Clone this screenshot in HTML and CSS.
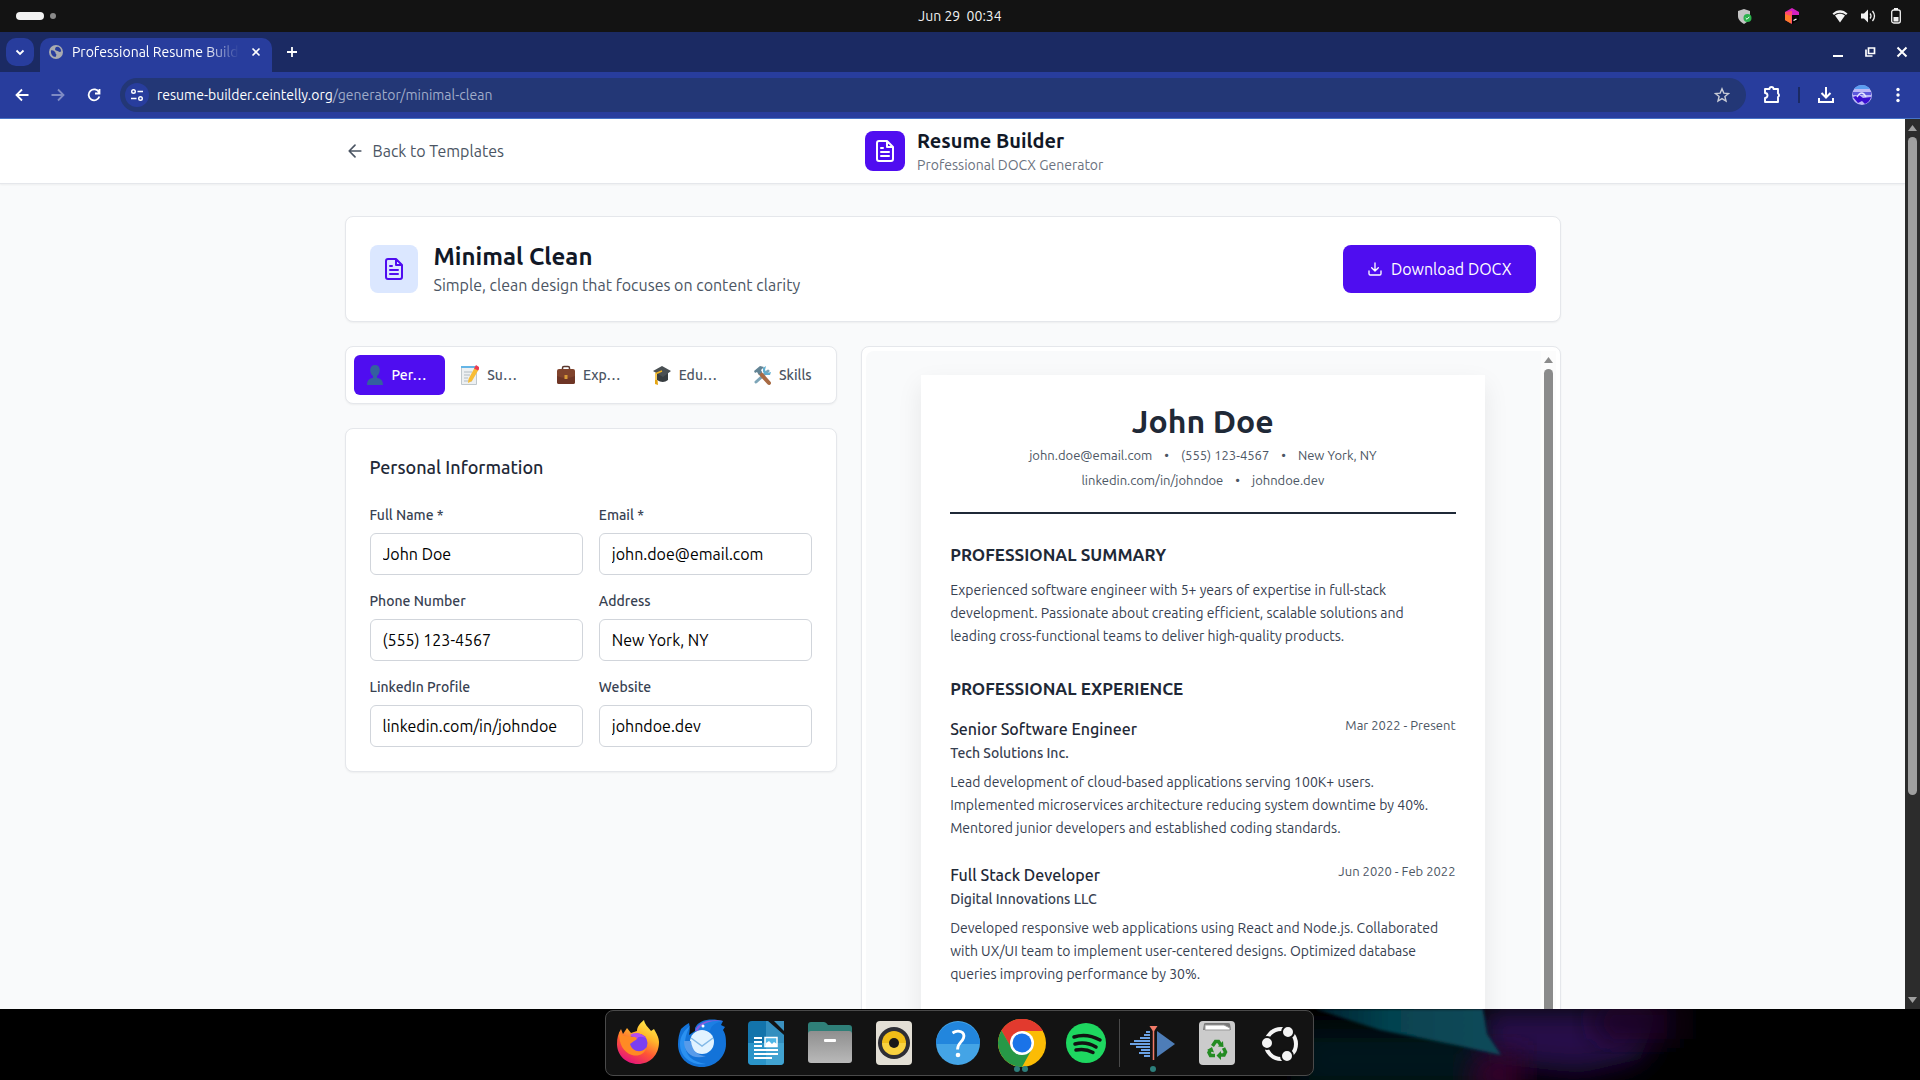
FILE: index.html
```html
<!DOCTYPE html>
<html lang="en">
<head>
    <meta charset="UTF-8">
    <meta name="viewport" content="width=device-width, initial-scale=1.0">
    <title>Professional Resume Builder</title>
    <link rel="stylesheet" href="styles.css">
</head>
<body>
    <!-- System bar -->
    <div class="system-bar">
        <div class="workspaces"><span class="workspace active"></span><span class="workspace"></span></div>
        <time class="clock">Jun 29&nbsp; 00:34</time>
        <div class="tray">
            <svg class="tray-shield" width="16" height="16" viewBox="0 0 16 16"><path d="M8 1l6 2v5c0 4-3 6-6 8-3-2-6-4-6-8V3z" fill="#c4c4c4"/><circle cx="11.500" cy="10" r="4" fill="#2bb24c"/><path d="M9.700 10l1.300 1.300 2.300-2.500" fill="none" stroke="#fff"/></svg>
            <svg class="tray-cube" width="16" height="16" viewBox="0 0 16 16"><path d="M1 4l7-4 7 4v4H1z" fill="#d41fc0"/><path d="M1 4l7-1v13l-7-4z" fill="#ff4a6d"/><path d="M1 6l6 2v7.500L1 12z" fill="#ff7a2b"/><path d="M8 7h7v5l-7 4z" fill="#050505"/><path d="M9.500 12.500l3-1.500" stroke="#fff" stroke-width="1.300"/></svg>
            <svg width="16" height="16" viewBox="0 0 16 16"><path d="M.5 5.500C5 1 11 1 15.500 5.500L14 7C10.500 4 5.500 4 2 7z" fill="#f2f2f2"/><path d="M3 7.500c3-2.500 7-2.500 10 0L8 14.500z" fill="#f2f2f2"/></svg>
            <svg width="16" height="16" viewBox="0 0 16 16"><path d="M1 5.500h3l4-4v13l-4-4H1z" fill="#f2f2f2"/><path d="M10 5.500q2 2.500 0 5M12.500 3q4 5 0 10" fill="none" stroke="#f2f2f2" stroke-width="1.300"/></svg>
            <svg width="16" height="16" viewBox="0 0 16 16"><path d="M6 0h4v2H6z" fill="#f2f2f2"/><rect x="3.700" y="2" width="8.600" height="13" rx="2" fill="none" stroke="#f2f2f2" stroke-width="1.300"/><path d="M5.500 9h5v4.500h-5z" fill="#f2f2f2"/></svg>
        </div>
    </div>

    <!-- Browser window -->
    <div class="tab-strip">
        <button class="tab-search" aria-label="Search tabs"><svg width="10" height="10" viewBox="0 0 10 10"><path d="M1.500 3.500L5 7l3.500-3.500" fill="none" stroke="#fff" stroke-width="1.800"/></svg></button>
        <div class="tab">
            <svg width="14" height="14" viewBox="0 0 14 14"><circle cx="7" cy="7" r="7" fill="#a9abb0"/><path d="M2 5.500c2-.5 3 .5 4 1.500 1 .7 0 1.500 1 2 1 .6 0 2-.5 3-3 0-5-3-4.500-6.500zM7 2l2-.2c2 .8 3 2.500 3.200 4.500-1 1-2.200.7-3-.1L7 5.500C5.500 5 6 3 7 2z" fill="#283d9d"/></svg>
            <span class="tab-title">Professional Resume Builder</span>
            <button class="tab-close" aria-label="Close tab"><svg width="10" height="10" viewBox="0 0 10 10"><path d="M1.500 1.500l7 7m0-7l-7 7" stroke="#fff" stroke-width="1.600"/></svg></button>
        </div>
        <button class="new-tab" aria-label="New tab"><svg width="12" height="12" viewBox="0 0 12 12"><path d="M6 1v10M1 6h10" stroke="#fff" stroke-width="1.800"/></svg></button>
        <div class="window-buttons">
            <button aria-label="Minimize"><svg width="12" height="12" viewBox="0 0 12 12"><path d="M1 10h10" stroke="#fff" stroke-width="2"/></svg></button>
            <button aria-label="Restore"><svg width="12" height="12" viewBox="0 0 12 12"><path d="M4.500 2h6v5.500h-6zM2 3.500V10h6.500" fill="none" stroke="#fff" stroke-width="1.700"/></svg></button>
            <button aria-label="Close"><svg width="12" height="12" viewBox="0 0 12 12"><path d="M1.500 1.500l9 9m0-9l-9 9" stroke="#fff" stroke-width="2"/></svg></button>
        </div>
    </div>
    <div class="toolbar">
        <div class="nav-buttons">
            <button aria-label="Back"><svg width="14" height="14" viewBox="0 0 14 14"><path d="M13.500 7H2M7 1.500L1.500 7 7 12.500" fill="none" stroke="#fff" stroke-width="1.800"/></svg></button>
            <button class="dimmed" aria-label="Forward"><svg width="14" height="14" viewBox="0 0 14 14"><path d="M.5 7H12M7 1.500L12.500 7 7 12.500" fill="none" stroke="#fff" stroke-width="1.800"/></svg></button>
            <button aria-label="Reload"><svg width="14" height="14" viewBox="0 0 14 14"><path d="M12 4.200A5.500 5.500 0 1 0 12.400 8.500M12.500 1v4.500H8" fill="none" stroke="#fff" stroke-width="1.800"/></svg></button>
        </div>
        <div class="address-bar">
            <button class="site-info" aria-label="Site information"><svg width="14" height="14" viewBox="0 0 14 14"><path d="M7.500 3.500H13M1 10.500h5.500" stroke="#fff" stroke-width="1.700"/><circle cx="3.500" cy="3.500" r="1.800" fill="none" stroke="#fff" stroke-width="1.400"/><circle cx="10.500" cy="10.500" r="1.800" fill="none" stroke="#fff" stroke-width="1.400"/></svg></button>
            <div class="url">resume-builder.ceintelly.org<span>/generator/minimal-clean</span></div>
            <button class="star" aria-label="Bookmark"><svg width="16" height="16" viewBox="0 0 16 16"><path d="M8 1.800l1.800 4.300 4.700.4-3.600 3 1.100 4.600-4-2.500-4 2.500 1.100-4.600-3.600-3 4.700-.4z" fill="none" stroke="#c9ccd6" stroke-width="1.400"/></svg></button>
        </div>
        <div class="toolbar-actions">
            <button aria-label="Extensions"><svg width="20" height="20" viewBox="0 0 20 20"><path d="M3 4h4.500a2 2 0 0 1 4 0H16v4.500a2 2 0 0 1 0 3.500V17H3v-4a2.500 2.500 0 0 0 0-5z" fill="none" stroke="#fff" stroke-width="1.900" stroke-linejoin="round"/></svg></button>
            <span class="toolbar-divider"></span>
            <button aria-label="Downloads"><svg width="18" height="18" viewBox="0 0 18 18"><path d="M9 1v10M4.500 7L9 11.500 13.500 7M2 12v4h14v-4" fill="none" stroke="#fff" stroke-width="2"/></svg></button>
            <button aria-label="Profile"><svg width="20" height="20" viewBox="0 0 20 20"><circle cx="10" cy="10" r="10" fill="#bcb8f7"/><path d="M2 4a10 10 0 0 1 16 0z" fill="#5b9df0"/><path d="M1 7h18v3H1z" fill="#5d59dc"/><path d="M1 12l6-2 4 3 8-1a10 10 0 0 1-6 7l-3-3-4 2z" fill="#3a10d0"/><path d="M5 12q5-8 9 0" fill="none" stroke="#e4e6ff" stroke-width="1.500"/></svg></button>
            <button aria-label="Menu"><svg width="16" height="16" viewBox="0 0 16 16" fill="#fff"><circle cx="8" cy="2.500" r="1.700"/><circle cx="8" cy="8" r="1.700"/><circle cx="8" cy="13.500" r="1.700"/></svg></button>
        </div>
    </div>

    <div class="viewport">
        <div class="page">
            <header class="site-header">
                <div class="container header-inner">
                    <a href="#" class="back-link">
                        <svg width="20" height="20" viewBox="0 0 24 24" fill="none" stroke="currentColor" stroke-width="2" stroke-linecap="round" stroke-linejoin="round"><path d="M19 12H5M12 19l-7-7 7-7"/></svg>
                        Back to Templates
                    </a>
                    <div class="brand">
                        <div class="brand-icon">
                            <svg width="24" height="24" viewBox="0 0 24 24" fill="none" stroke="currentColor" stroke-width="2" stroke-linecap="round" stroke-linejoin="round"><path d="M14 2H6a2 2 0 0 0-2 2v16a2 2 0 0 0 2 2h12a2 2 0 0 0 2-2V8zM14 2v6h6M16 13H8M16 17H8M10 9H8"/></svg>
                        </div>
                        <div>
                            <div class="brand-name">Resume Builder</div>
                            <div class="brand-tagline">Professional DOCX Generator</div>
                        </div>
                    </div>
                    <div class="header-spacer"></div>
                </div>
            </header>

            <main class="container main">
                <section class="card template-card">
                    <div class="template-icon">
                        <svg width="24" height="24" viewBox="0 0 24 24" fill="none" stroke="currentColor" stroke-width="2" stroke-linecap="round" stroke-linejoin="round"><path d="M14 2H6a2 2 0 0 0-2 2v16a2 2 0 0 0 2 2h12a2 2 0 0 0 2-2V8zM14 2v6h6M16 13H8M16 17H8M10 9H8"/></svg>
                    </div>
                    <div class="template-text">
                        <h1>Minimal Clean</h1>
                        <p>Simple, clean design that focuses on content clarity</p>
                    </div>
                    <button class="download-btn">
                        <svg width="16" height="16" viewBox="0 0 24 24" fill="none" stroke="currentColor" stroke-width="2" stroke-linecap="round" stroke-linejoin="round"><path d="M21 15v4a2 2 0 0 1-2 2H5a2 2 0 0 1-2-2v-4M7 10l5 5 5-5M12 15V3"/></svg>
                        Download DOCX
                    </button>
                </section>

                <div class="columns">
                    <div class="editor">
                        <nav class="card tabs">
                            <button class="tab-btn active">
                                <svg width="18" height="22" viewBox="0 0 18 22"><path d="M1 21c0-5 3-7 6-7v-2C3 9 3 1 9 1s6 8 2 11v2c3 0 6 2 6 7z" fill="#34609f"/></svg>
                                <span>Per…</span>
                            </button>
                            <button class="tab-btn">
                                <svg width="18" height="22" viewBox="0 0 18 22"><path d="M.5 2.500h15v18H.5z" fill="#edf0f2" stroke="#bfc7cc"/><path d="M0 2h16v2H0z" fill="#64b5e6"/><path d="M3 8h8M3 11h6M3 14h4M3 17h8" stroke="#b3bcc2"/><path d="M14 3l4 2-7 12-4 2 .5-4z" fill="#f8bd35"/><path d="M15 1l3 2v2l-1 1.500-4-2z" fill="#ec3b52"/></svg>
                                <span>Su…</span>
                            </button>
                            <button class="tab-btn">
                                <svg width="18" height="22" viewBox="0 0 18 22"><path d="M5.500 6V4q0-1.500 1.500-1.500h4q1.500 0 1.500 1.500v2" fill="none" stroke="#5b382e" stroke-width="1.500"/><rect y="5" width="18" height="15" rx="2" fill="#80432c"/><path d="M0 12q9 4 18 0v6q0 2-2 2H2q-2 0-2-2z" fill="#6e3525"/><rect x="7.500" y="11" width="3" height="4" fill="#d99a37"/></svg>
                                <span>Exp…</span>
                            </button>
                            <button class="tab-btn">
                                <svg width="18" height="22" viewBox="0 0 18 22"><path d="M4 9h11v7q-5 4-11 0z" fill="#373d40"/><path d="M0 7l9-5 9 5-8 6z" fill="#4a5053"/><path d="M9 7L3 9.500V17" fill="none" stroke="#f2b51d" stroke-width="1.500"/><path d="M2 16h2.500l.5 5-3-1z" fill="#e5a512"/></svg>
                                <span>Edu…</span>
                            </button>
                            <button class="tab-btn last">
                                <svg width="18" height="22" viewBox="0 0 18 22"><path d="M15 7L3 18" stroke="#7da5b8" stroke-width="3" stroke-linecap="round"/><path d="M13 2l-1 4 2 3 4-1-1 3h-4l-3-3V4z" fill="#5faed0"/><path d="M7 9l9 10" stroke="#a86a43" stroke-width="4" stroke-linecap="round"/><path d="M1 7l6-5 4 1-3 3 1 2-3 3-2-3-2 1z" fill="#628394"/></svg>
                                <span>Skills</span>
                            </button>
                        </nav>

                        <form class="card form-card">
                            <h2>Personal Information</h2>
                            <div class="form-grid">
                                <div class="field">
                                    <label for="fullName">Full Name *</label>
                                    <input type="text" id="fullName" value="John Doe">
                                </div>
                                <div class="field">
                                    <label for="email">Email *</label>
                                    <input type="email" id="email" value="john.doe@email.com">
                                </div>
                                <div class="field">
                                    <label for="phone">Phone Number</label>
                                    <input type="tel" id="phone" value="(555) 123-4567">
                                </div>
                                <div class="field">
                                    <label for="address">Address</label>
                                    <input type="text" id="address" value="New York, NY">
                                </div>
                                <div class="field">
                                    <label for="linkedin">LinkedIn Profile</label>
                                    <input type="text" id="linkedin" value="linkedin.com/in/johndoe">
                                </div>
                                <div class="field">
                                    <label for="website">Website</label>
                                    <input type="text" id="website" value="johndoe.dev">
                                </div>
                            </div>
                        </form>
                    </div>

                    <div class="card preview-card">
                        <div class="preview">
                            <article class="paper">
                                <div class="paper-header">
                                    <div class="paper-name">John Doe</div>
                                    <div class="contact"><span>john.doe@email.com</span><span>•</span><span>(555) 123-4567</span><span>•</span><span>New York, NY</span></div>
                                    <div class="contact"><span>linkedin.com/in/johndoe</span><span>•</span><span>johndoe.dev</span></div>
                                </div>
                                <section class="paper-section">
                                    <h3>PROFESSIONAL SUMMARY</h3>
                                    <p>Experienced software engineer with 5+ years of expertise in full-stack<br>development. Passionate about creating efficient, scalable solutions and<br>leading cross-functional teams to deliver high-quality products.</p>
                                </section>
                                <section class="paper-section">
                                    <h3>PROFESSIONAL EXPERIENCE</h3>
                                    <div class="job">
                                        <div class="job-head">
                                            <h4>Senior Software Engineer</h4>
                                            <span class="dates">Mar 2022 - Present</span>
                                        </div>
                                        <div class="company">Tech Solutions Inc.</div>
                                        <p>Lead development of cloud-based applications serving 100K+ users.<br>Implemented microservices architecture reducing system downtime by 40%.<br>Mentored junior developers and established coding standards.</p>
                                    </div>
                                    <div class="job">
                                        <div class="job-head">
                                            <h4>Full Stack Developer</h4>
                                            <span class="dates">Jun 2020 - Feb 2022</span>
                                        </div>
                                        <div class="company">Digital Innovations LLC</div>
                                        <p>Developed responsive web applications using React and Node.js. Collaborated<br>with UX/UI team to implement user-centered designs. Optimized database<br>queries improving performance by 30%.</p>
                                    </div>
                                </section>
                            </article>
                        </div>
                        <div class="scrollbar light">
                            <svg width="9" height="6" viewBox="0 0 9 6"><path d="M4.500 0L9 6H0z" fill="currentColor"/></svg>
                            <span class="thumb"></span>
                        </div>
                    </div>
                </div>
            </main>
        </div>
        <div class="scrollbar dark">
            <svg width="9" height="6" viewBox="0 0 9 6"><path d="M4.500 0L9 6H0z" fill="currentColor"/></svg>
            <div class="track"><span class="thumb"></span></div>
            <svg width="9" height="6" viewBox="0 0 9 6"><path d="M4.500 6L9 0H0z" fill="currentColor"/></svg>
        </div>
    </div>

    <!-- Desktop and dock -->
    <footer class="desktop">
        <svg class="wallpaper" viewBox="0 0 1920 71" preserveAspectRatio="none">
            <defs>
                <filter id="soft" x="-20%" y="-50%" width="140%" height="200%"><feGaussianBlur stdDeviation="14"/></filter>
                <filter id="edge"><feGaussianBlur stdDeviation="1.500"/></filter>
                <linearGradient id="teal" x1="0" x2="1"><stop offset="0" stop-color="#04202e"/><stop offset=".4" stop-color="#06424f"/><stop offset="1" stop-color="#084a5a"/></linearGradient>
            </defs>
            <path d="M1300 20h200v60h-200z" fill="#06131a" filter="url(#soft)"/>
            <path d="M1480 0h180l-20 50-60 14-90-10z" fill="#26104a" filter="url(#soft)"/>
            <path d="M1475 45h50v40h-60z" fill="#35052c" filter="url(#soft)"/>
            <path d="M1590 0h90v30h-80z" fill="#1a0622" filter="url(#soft)"/>
            <path d="M1315 0h168l4 25 14 21-46-10-75-15z" fill="url(#teal)" filter="url(#edge)"/>
        </svg>
        <div class="dock">
            <button class="app" aria-label="Firefox"><svg width="48" height="48" viewBox="0 0 48 48">
                <defs><linearGradient id="fox" x1=".8" y1="0" x2=".3" y2="1"><stop offset="0" stop-color="#fff44f"/><stop offset=".35" stop-color="#ffb52b"/><stop offset=".65" stop-color="#ff5634"/><stop offset="1" stop-color="#e3117f"/></linearGradient></defs>
                <path d="M30 1c1 5 4 7 7 11l3-2c2 4 5 8 5 13 0 13-9 22-21 22S3 36 3 25c0-6 1-10 4-15l2 5 4-6 4 5 6-2c0-4 3-8 7-11z" fill="url(#fox)"/>
                <circle cx="24" cy="24" r="9.500" fill="#7b3ff2"/><path d="M16 16q8-5 16 3-8-3-9 1z" fill="#b64cf0"/>
                <path d="M5 13l5 4 11 1c3 1 2 3-1 4l-4 3c2 7 10 10 16 4-1 6-8 9-14 7C9 33 5 25 5 13z" fill="#ff8a24"/>
            </svg></button>
            <button class="app" aria-label="Thunderbird"><svg width="48" height="48" viewBox="0 0 48 48">
                <path d="M17 9c4-9 17-10 28-7l-2 4 4 2-2 3c3 5 3 9 3 14 0 13-11 23-24 23C9 48 0 38 0 25c0-5 1-10 3-15 3-3 6-5 8-6 1 4 1 8 0 12l6-4z" fill="#1373d9"/>
                <path d="M2 25c0 14 13 22 26 20C14 43 7 36 7 25c0-8 3-14 5-18C6 11 2 18 2 25z" fill="#2b91f1"/>
                <path d="M17 12C20 2 34 0 45 2c-10 1-15 4-17 9z" fill="#865de0"/><path d="M20 11C24 4 34 1 45 2c-9 2-12 5-13 10z" fill="#1c7fe3"/><circle cx="25" cy="7" r="1.500" fill="#fff"/>
                <circle cx="24" cy="23" r="12" fill="#e2f3ff"/><path d="M13 19l11 8 11-8" fill="none" stroke="#82b9e7" stroke-width="1.500"/><path d="M6 22c0 13 10 19 22 15-8 0-14-5-15-15z" fill="#579bea"/>
            </svg></button>
            <button class="app" aria-label="LibreOffice Writer"><svg width="48" height="48" viewBox="0 0 48 48">
                <path d="M10 2h16l16 14v26q0 4-4 4H10q-4 0-4-4V6q0-4 4-4z" fill="#1374ab"/><path d="M6 24h36v18q0 4-4 4H10q-4 0-4-4z" fill="#2a94c8"/><path d="M24 2h2l16 14v26q0 4-4 4H24z" fill="#63b8df" opacity=".4"/><path d="M32 2h10v10z" fill="#3b91bf"/>
                <path d="M12 19h8M12 23h8M12 27h8M12 31h24M12 35h24M12 39h18" stroke="#fff" stroke-width="2"/><path d="M23 18.500h12v9H23z" fill="#4fb6e6" stroke="#fff" stroke-width="1.500"/><path d="M24 27v-3l3-2 3 3 2-2 3 2v2z" fill="#fff"/>
            </svg></button>
            <button class="app" aria-label="Files"><svg width="48" height="48" viewBox="0 0 48 48">
                <defs><linearGradient id="folder" x1="0" y1="0" x2="0" y2="1"><stop offset="0" stop-color="#8f8f8f"/><stop offset="1" stop-color="#b9b9b9"/></linearGradient></defs>
                <path d="M5 3h13q2 0 4 3h21q3 0 3 3v12H2V6q0-3 3-3z" fill="#2f7f78"/><rect x="2" y="12" width="44" height="32" rx="3" fill="url(#folder)"/><rect x="18" y="20" width="12" height="3" rx="1" fill="#fff"/>
            </svg></button>
            <button class="app" aria-label="Rhythmbox"><svg width="48" height="48" viewBox="0 0 48 48">
                <rect x="6" y="2" width="36" height="44" rx="4" fill="#e3dfd5"/><circle cx="24" cy="24" r="16" fill="#2e2e35"/><circle cx="24" cy="24" r="12" fill="#f1bd17"/><path d="M12 24a12 12 0 0 0 24 0z" fill="#ffe05b" opacity=".6"/><circle cx="24" cy="24" r="5" fill="#191919"/>
            </svg></button>
            <button class="app" aria-label="Help"><svg width="48" height="48" viewBox="0 0 48 48">
                <circle cx="24" cy="24" r="22" fill="#44a4e6"/><path d="M2 25a22 22 0 0 1 44 0z" fill="#2286dd"/><path d="M18.500 14c6-4 13-1 11 5-1.500 4.500-6 5-6 11.500" fill="none" stroke="#fff" stroke-width="2.800"/><circle cx="24" cy="36" r="2.300" fill="#fff"/>
            </svg></button>
            <button class="app two-windows" aria-label="Chrome"><svg width="48" height="48" viewBox="0 0 48 48">
                <circle cx="24" cy="24" r="24" fill="#fbbc05"/><path d="M3.500 11.500A24 24 0 0 1 45 12H24L13 29z" fill="#e23a2e"/><path d="M3.500 11.500A24 24 0 0 0 24 48l10-18-20 0z" fill="#279847"/><circle cx="24" cy="24" r="12" fill="#fff"/><circle cx="24" cy="24" r="9.500" fill="#1a73e8"/>
            </svg></button>
            <button class="app" aria-label="Spotify"><svg width="48" height="48" viewBox="0 0 48 48">
                <circle cx="24" cy="24" r="20" fill="#1ed760"/><path d="M12 18q13-4 26 3M13 25q11-3 21 3M14 31q9-2 17 2.500" fill="none" stroke="#121212" stroke-width="3.500" stroke-linecap="round"/>
            </svg></button>
            <span class="dock-divider"></span>
            <button class="app one-window" aria-label="Audio player"><svg width="48" height="48" viewBox="0 0 48 48">
                <path d="M17 13h4M15 16h6M11 19h10M5 22h16M1 25h20M7 28h14M12 31h9M10 34h11M15 37h6" stroke="#6ba2e5" stroke-width="2"/><path d="M28 12l18 13-18 13z" fill="#4e7db7"/><path d="M24.500 8v33" stroke="#f27a68" stroke-width="1.500"/><path d="M20.500 7h8l-4 6z" fill="#f27a68"/>
            </svg></button>
            <button class="app" aria-label="Trash"><svg width="48" height="48" viewBox="0 0 48 48">
                <rect x="6" y="2" width="36" height="44" rx="4" fill="#cbcbcb"/><path d="M10 11l1-6q0-1 2-1h22q2 0 2 1l1 6z" fill="#777"/><path d="M12 11V6h19l6 3v2z" fill="#fff" stroke="#999"/>
                <g fill="none" stroke="#238b22" stroke-width="3.500"><path d="M19.500 27l3-4.500h3l2 3"/><path d="M30.500 29l2 4-1.500 3h-4"/><path d="M22 36.500h-4.500l-1.500-3 1.500-2.500"/></g><path d="M25 27.500l5.500.5-.5-6zM28 32l-4.500 4.500L28 41zM14 31l5-3 2 5.500z" fill="#238b22"/>
            </svg></button>
            <button class="app" aria-label="Show apps"><svg width="48" height="48" viewBox="0 0 48 48">
                <circle cx="24" cy="25" r="15" fill="none" stroke="#f4f4f4" stroke-width="4"/><g fill="#f4f4f4" stroke="#131313" stroke-width="2"><circle cx="10" cy="24" r="6"/><circle cx="31" cy="13" r="6"/><circle cx="30" cy="37" r="6"/></g>
            </svg></button>
        </div>
    </footer>
</body>
</html>
```

FILE: styles.css
```css
* {
    box-sizing: border-box;
    margin: 0;
    padding: 0;
}

body {
    display: flex;
    flex-direction: column;
    height: 100vh;
    overflow: hidden;
    font-family: Ubuntu, "Noto Sans", sans-serif;
    font-size: 16px;
    line-height: 24px;
    background: #000;
    color: #111827;
}

button {
    display: flex;
    align-items: center;
    justify-content: center;
    border: none;
    background: none;
    font: inherit;
    color: inherit;
    cursor: pointer;
}

svg {
    flex-shrink: 0;
}

/* System bar */
.system-bar {
    display: grid;
    grid-template-columns: 1fr auto 1fr;
    align-items: center;
    height: 32px;
    flex-shrink: 0;
    padding: 0 16px;
    background: #131313;
    color: #f2f2f2;
}

.workspaces {
    display: flex;
    align-items: center;
    gap: 6px;
}

.workspace {
    width: 6px;
    height: 6px;
    border-radius: 4px;
    background: #8a8a8a;
}

.workspace.active {
    width: 28px;
    height: 8px;
    background: #f2f2f2;
}

.clock {
    font-size: 14px;
}

.tray {
    display: flex;
    justify-content: flex-end;
    gap: 12px;
}

.tray-shield,
.tray-cube {
    margin-right: 20px;
}

/* Browser */
.tab-strip {
    display: flex;
    align-items: center;
    height: 40px;
    flex-shrink: 0;
    padding: 0 4px 0 6px;
    background: #1b2a63;
    color: #fff;
}

.tab-search {
    width: 28px;
    height: 28px;
    border-radius: 10px;
    background: #283d9d;
}

.tab {
    display: flex;
    align-items: center;
    align-self: flex-end;
    gap: 9px;
    width: 232px;
    height: 34px;
    margin-left: 6px;
    padding: 0 8px 6px 9px;
    border-radius: 10px 10px 0 0;
    background: #283d9d;
}

.tab-title {
    flex: 1;
    overflow: hidden;
    white-space: nowrap;
    font-size: 14px;
    -webkit-mask-image: linear-gradient(to right, #000 80%, transparent);
    mask-image: linear-gradient(to right, #000 80%, transparent);
}

.tab-close {
    width: 16px;
    height: 16px;
}

.new-tab {
    width: 28px;
    height: 28px;
    margin-left: 6px;
}

.window-buttons {
    display: flex;
    gap: 4px;
    margin-left: auto;
}

.window-buttons button {
    width: 28px;
    height: 28px;
}

.toolbar {
    display: flex;
    align-items: center;
    height: 47px;
    flex-shrink: 0;
    padding: 0 12px 0 8px;
    border-bottom: 1px solid #4673c6;
    background: #283d9d;
    color: #fff;
}

.nav-buttons {
    display: flex;
    gap: 8px;
    margin-right: 12px;
}

.nav-buttons button {
    width: 28px;
    height: 28px;
}

.dimmed {
    opacity: 0.4;
}

.address-bar {
    display: flex;
    align-items: center;
    flex: 1;
    height: 34px;
    padding: 0 14px 0 5px;
    border-radius: 17px;
    background: #233776;
}

.site-info {
    width: 24px;
    height: 24px;
    margin-right: 8px;
    border-radius: 50%;
    background: #283d9d;
}

.url {
    flex: 1;
    font-size: 14px;
}

.url span {
    color: #a0acc9;
}

.star {
    width: 20px;
    height: 20px;
}

.toolbar-actions {
    display: flex;
    align-items: center;
    gap: 16px;
    padding-left: 16px;
}

.toolbar-actions button {
    width: 20px;
    height: 20px;
}

.toolbar-divider {
    width: 2px;
    height: 16px;
    background: #1b2a63;
}

.viewport {
    display: flex;
    flex: 1;
    min-height: 0;
}

.page {
    flex: 1;
    overflow: hidden;
    background: #f9fafb;
}

.scrollbar {
    display: flex;
    flex-direction: column;
    align-items: center;
    flex-shrink: 0;
    width: 15px;
    padding: 6px 0;
}

.scrollbar .thumb {
    width: 9px;
    border-radius: 5px;
    background: currentColor;
}

.scrollbar.dark {
    background: #2c2c2c;
    color: #9f9f9f;
}

.track {
    flex: 1;
    margin: 6px 0;
}

.dark .thumb {
    display: block;
    height: 77%;
}

.scrollbar.light {
    gap: 6px;
    background: #fcfcfc;
    color: #8b8b8b;
}

.light .thumb {
    flex: 1;
}

/* Header */
.container {
    max-width: 1280px;
    margin: 0 auto;
    padding: 0 32px;
}

.site-header {
    border-bottom: 1px solid #e5e7eb;
    background: #fff;
    box-shadow: 0 1px 2px rgba(0, 0, 0, 0.05);
}

.header-inner {
    display: flex;
    align-items: center;
    justify-content: space-between;
    height: 64px;
}

.back-link {
    display: flex;
    align-items: center;
    gap: 8px;
    color: #4b5563;
    text-decoration: none;
}

.brand {
    display: flex;
    align-items: center;
    gap: 12px;
}

.brand-icon,
.template-icon {
    display: flex;
    align-items: center;
    justify-content: center;
    width: 40px;
    height: 40px;
    border-radius: 8px;
    background: #4f0df0;
    color: #fff;
}

.brand-name {
    font-size: 20px;
    font-weight: 600;
    line-height: 28px;
}

.brand-tagline {
    font-size: 14px;
    line-height: 20px;
    color: #6b7280;
}

.header-spacer {
    width: 96px;
}

/* Template card */
.main {
    padding-top: 32px;
}

.card {
    border: 1px solid #e5e7eb;
    border-radius: 8px;
    background: #fff;
    box-shadow: 0 1px 2px rgba(0, 0, 0, 0.05);
}

.template-card {
    display: flex;
    align-items: center;
    gap: 16px;
    margin-bottom: 24px;
    padding: 24px;
}

.template-icon {
    width: 48px;
    height: 48px;
    background: #dbe7ff;
    color: #4f0df0;
}

.template-text {
    flex: 1;
}

.template-text h1 {
    font-size: 24px;
    font-weight: 600;
    line-height: 32px;
}

.template-text p {
    color: #4b5563;
}

.download-btn {
    gap: 8px;
    height: 48px;
    padding: 0 24px;
    border-radius: 8px;
    background: #4f0df0;
    color: #fff;
}

/* Editor */
.columns {
    display: grid;
    grid-template-columns: repeat(12, 1fr);
    gap: 24px;
    align-items: start;
}

.editor {
    grid-column: span 5;
    display: flex;
    flex-direction: column;
    gap: 24px;
}

.tabs {
    display: grid;
    grid-template-columns: repeat(5, 1fr);
    gap: 4px;
    padding: 8px;
}

.tab-btn {
    justify-content: flex-start;
    gap: 8px;
    height: 40px;
    padding: 0 12px;
    border-radius: 6px;
    font-size: 14px;
    font-weight: 500;
    color: #4b5563;
}

.tab-btn.last {
    justify-content: center;
}

.tab-btn.active {
    background: #4f0df0;
    color: #fff;
}

.form-card {
    padding: 24px;
}

.form-card h2 {
    margin-bottom: 24px;
    font-size: 18px;
    font-weight: 500;
    line-height: 28px;
    color: #1f2937;
}

.form-grid {
    display: grid;
    grid-template-columns: 1fr 1fr;
    gap: 16px;
}

.field label {
    display: block;
    margin-bottom: 8px;
    font-size: 14px;
    font-weight: 500;
    line-height: 20px;
    color: #374151;
}

.field input {
    display: block;
    width: 100%;
    height: 42px;
    padding: 0 12px;
    border: 1px solid #d1d5db;
    border-radius: 6px;
    background: #fff;
    font: inherit;
    color: #000;
}

/* Preview */
.preview-card {
    grid-column: span 7;
    display: flex;
    padding: 4px;
}

.preview {
    flex: 1;
    padding: 24px 56px 24px 55px;
    border-radius: 8px 0 0 8px;
    background: #f9fafb;
}

.paper {
    min-height: 800px;
    padding: 28px 29px;
    background: #fff;
    box-shadow: 0 10px 24px rgba(0, 0, 0, 0.08);
    color: #1f2937;
}

.paper-header {
    padding-bottom: 19px;
    border-bottom: 2px solid #1f2937;
    text-align: center;
}

.paper-name {
    margin-bottom: 4px;
    font-size: 32px;
    font-weight: 600;
    line-height: 36px;
}

.contact {
    display: flex;
    justify-content: center;
    gap: 12px;
    font-size: 13px;
    line-height: 25px;
    color: #4b5563;
}

.paper-section {
    margin-top: 29px;
}

.paper-section h3 {
    margin-bottom: 12px;
    font-size: 17px;
    font-weight: 600;
    line-height: 24px;
}

.paper-section p {
    font-size: 14px;
    line-height: 23px;
    color: #374151;
}

.job {
    margin-top: 23px;
}

h3 + .job {
    margin-top: 16px;
}

.job-head {
    display: flex;
    align-items: flex-start;
    justify-content: space-between;
}

.job h4 {
    font-size: 16px;
    font-weight: 500;
}

.dates {
    font-size: 13px;
    line-height: 16px;
    color: #4b5563;
}

.company {
    margin-bottom: 6px;
    font-size: 14px;
    font-weight: 500;
    color: #374151;
}

/* Dock */
.desktop {
    position: relative;
    display: flex;
    justify-content: center;
    height: 71px;
    flex-shrink: 0;
    overflow: hidden;
    padding: 1px 1px 4px 0;
}

.wallpaper {
    position: absolute;
    top: 0;
    left: 0;
    width: 100%;
    height: 100%;
}

.dock {
    display: flex;
    align-items: center;
    position: relative;
    border: 1px solid #4a4a4a;
    border-radius: 8px;
    background: #131313;
}

.app {
    position: relative;
    width: 64px;
    height: 64px;
}

.dock-divider {
    width: 1px;
    height: 48px;
    margin: 0 1px;
    background: #4a4a4a;
}

.one-window::after,
.two-windows::after {
    content: "";
    position: absolute;
    bottom: 3px;
    width: 6px;
    height: 6px;
    border-radius: 50%;
    background: #2d7f7b;
}

.two-windows::after {
    left: 24px;
    box-shadow: 8px 0 #2d7f7b;
}
```
